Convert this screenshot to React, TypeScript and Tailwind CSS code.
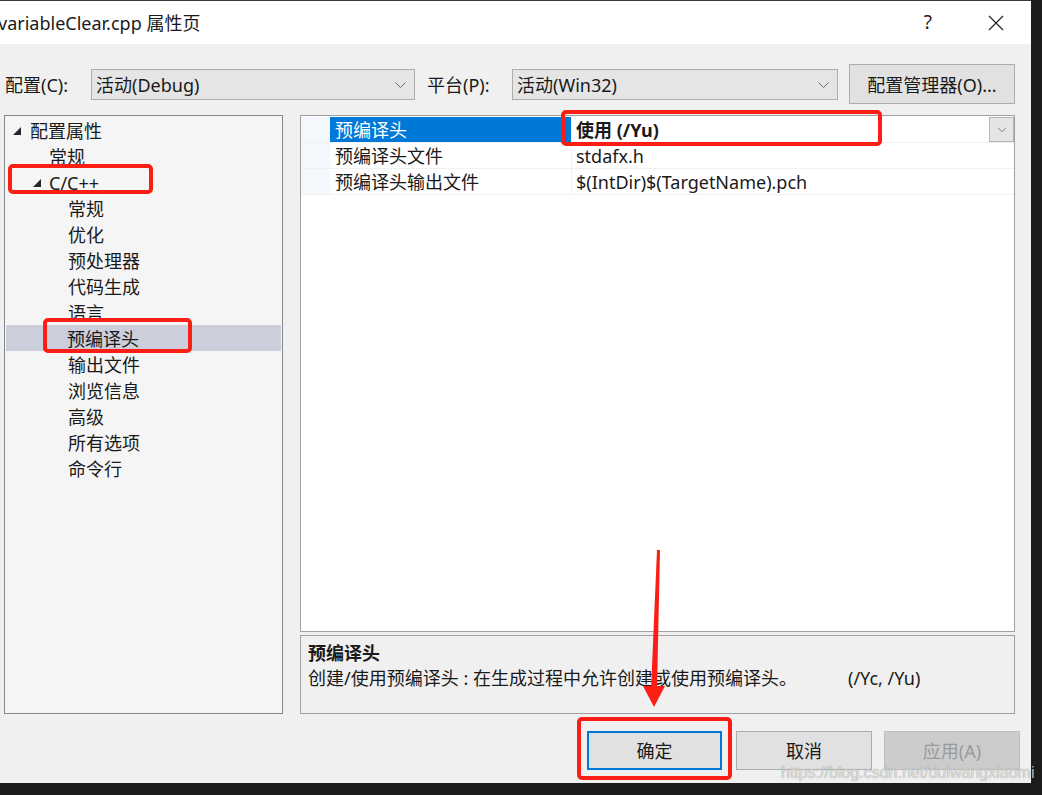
import { ChevronDown } from "lucide-react";

type TreeItem = {
  label: string;
  pad: string;
  arrow?: boolean;
  selected?: boolean;
};

const treeItems: TreeItem[] = [
  { label: "配置属性", pad: "pl-[7px]", arrow: true },
  { label: "常规", pad: "pl-[43px]" },
  { label: "C/C++", pad: "pl-[27px]", arrow: true },
  { label: "常规", pad: "pl-[62px]" },
  { label: "优化", pad: "pl-[62px]" },
  { label: "预处理器", pad: "pl-[62px]" },
  { label: "代码生成", pad: "pl-[62px]" },
  { label: "语言", pad: "pl-[62px]" },
  { label: "预编译头", pad: "pl-[61px]", selected: true },
  { label: "输出文件", pad: "pl-[62px]" },
  { label: "浏览信息", pad: "pl-[62px]" },
  { label: "高级", pad: "pl-[62px]" },
  { label: "所有选项", pad: "pl-[62px]" },
  { label: "命令行", pad: "pl-[62px]" },
];

const props = [
  { name: "预编译头", value: "使用 (/Yu)", selected: true },
  { name: "预编译头文件", value: "stdafx.h" },
  { name: "预编译头输出文件", value: "$(IntDir)$(TargetName).pch" },
];

// small filled corner triangle used by the tree's expanded nodes
function Expander() {
  return (
    <svg width="8" height="8" viewBox="0 0 8 8" className="shrink-0">
      <polygon points="8,0 8,8 0,8" fill="#262626" />
    </svg>
  );
}

function ComboChevron() {
  return (
    <svg width="11" height="6" viewBox="0 0 11 6" className="shrink-0">
      <polyline points="0.5,0.5 5.5,5.5 10.5,0.5" fill="none" stroke="#6d6d6d" strokeWidth="1" />
    </svg>
  );
}

function Combo({ text, width }: { text: string; width: string }) {
  return (
    <div className={`${width} h-[31px] bg-[#e5e5e5] border border-[#adadad] flex items-center pl-[4px] pr-[8px] pt-[2px]`}>
      <span className="flex-1">{text}</span>
      <ComboChevron />
    </div>
  );
}

export default function App() {
  return (
    <div className="relative w-[1042px] h-[795px] bg-[#1c1c1c] overflow-hidden text-[18px] text-[#1a1a1a] font-['Noto_Sans','Noto_Sans_CJK_SC',sans-serif]">
      <div className="w-[1031px] h-[783px] flex flex-col border-t border-[#3a3a3a]">
        {/* Title bar */}
        <div className="h-[43px] bg-white flex items-center shrink-0">
          <span className="ml-[-2px] flex-1 leading-none">variableClear.cpp 属性页</span>
          <span className="mr-[56px] text-[19px] leading-none text-[#222]">?</span>
          <svg width="16" height="16" viewBox="0 0 16 16" className="mr-[27px]">
            <path d="M1 1 L15 15 M15 1 L1 15" stroke="#222" strokeWidth="1.2" />
          </svg>
        </div>

        {/* Body */}
        <div className="flex-1 bg-[#f0f0f0] flex flex-col">
          {/* Configuration row */}
          <div className="mt-[20px] h-[40px] flex items-center pl-[5px]">
            <span className="w-[86px] pt-[2px]">配置(C):</span>
            <Combo text="活动(Debug)" width="w-[324px]" />
            <span className="ml-[12px] w-[85px] pt-[2px]">平台(P):</span>
            <Combo text="活动(Win32)" width="w-[326px]" />
            <div className="ml-[11px] w-[166px] h-[40px] bg-[#e1e1e1] border border-[#adadad] flex items-center justify-center pt-[2px]">
              配置管理器(O)...
            </div>
          </div>

          {/* Main panels */}
          <div className="mt-[11px] flex pl-[4px]">
            {/* Tree */}
            <div className="w-[279px] h-[599px] bg-[#f5f5f5] border border-[#828790] pt-[1px]">
              {treeItems.map((item, i) => (
                <div
                  key={i}
                  className={`h-[26px] flex items-center pt-[2px] ml-[1px] mr-[1px] ${item.pad} ${item.selected ? "bg-[#cccedb]" : ""}`}
                >
                  {item.arrow && <Expander />}
                  {item.arrow && <span className={i === 0 ? "w-[9px]" : "w-[8px]"} />}
                  <span>{item.label}</span>
                </div>
              ))}
            </div>

            {/* Right side: property grid + description */}
            <div className="ml-[17px] w-[715px] flex flex-col">
              <div className="h-[517px] bg-white border border-[#a0a0a0] pt-[1px]">
                {props.map((p, i) => (
                  <div key={i} className="h-[26px] flex border-b border-[#f0f0f0]">
                    <div className="w-[29px] bg-[#f4f7fc]" />
                    <div
                      className={`w-[242px] flex items-center pl-[5px] pt-[2px] border-r border-[#f0f0f0] ${p.selected ? "bg-[#0078d7] text-white" : ""}`}
                    >
                      {p.name}
                    </div>
                    <div className={`flex-1 flex items-center pl-[4px] ${p.selected ? "font-bold" : ""}`}>
                      <span className="flex-1 pt-[2px]">{p.value}</span>
                      {p.selected && (
                        <div className="w-[25px] h-[25px] bg-[#e5e5e5] border border-[#b4b4b4] flex items-center justify-center">
                          <ChevronDown className="size-[14px] text-[#555]" strokeWidth={1.2} />
                        </div>
                      )}
                    </div>
                  </div>
                ))}
              </div>

              <div className="mt-[3px] h-[79px] bg-[#f0f0f0] border border-[#a0a0a0] pl-[7px] pt-[5px] flex flex-col">
                <div className="h-[24px] flex items-center font-bold">预编译头</div>
                <div className="h-[26px] flex items-center">
                  <span className="w-[540px]">创建/使用预编译头 : 在生成过程中允许创建或使用预编译头。</span>
                  <span>(/Yc, /Yu)</span>
                </div>
              </div>
            </div>
          </div>

          {/* Dialog buttons */}
          <div className="mt-[17px] flex justify-end pr-[11px] gap-[14px]">
            <div className="w-[135px] h-[39px] bg-[#e1e1e1] border-2 border-[#0078d7] flex items-center justify-center pt-[2px]">
              确定
            </div>
            <div className="flex gap-[12px]">
              <div className="w-[136px] h-[39px] bg-[#e1e1e1] border border-[#adadad] flex items-center justify-center pt-[2px]">
                取消
              </div>
              <div className="w-[136px] h-[39px] bg-[#cccccc] border border-[#bfbfbf] flex items-center justify-center pt-[2px] text-[#9a9a9a]">
                应用(A)
              </div>
            </div>
          </div>
        </div>
      </div>

      {/* Red annotation boxes */}
      <div className="absolute left-[8px] top-[164px] w-[145px] h-[30px] border-4 border-[#fa1e14] rounded-[5px]" />
      <div className="absolute left-[43px] top-[318px] w-[149px] h-[35px] border-4 border-[#fa1e14] rounded-[5px]" />
      <div className="absolute left-[561px] top-[110px] w-[321px] h-[36px] border-4 border-[#fa1e14] rounded-[5px]" />
      <div className="absolute left-[577px] top-[717px] w-[155px] h-[63px] border-4 border-[#fa1e14] rounded-[5px]" />

      {/* Red arrow */}
      <svg className="absolute left-0 top-0 pointer-events-none" width="1042" height="795">
        <polygon points="657,550 660,550 657,690 651,690" fill="#fa1e14" />
        <polygon points="643,686 665,686 654,707" fill="#fa1e14" />
      </svg>

      {/* Watermark */}
      <div className="absolute left-[781px] top-[763px] text-[16px] leading-[20px] font-['Liberation_Sans',sans-serif] text-white/70 [text-shadow:0_0_1px_rgba(0,0,0,0.5)]">
        https://blog.csdn.net/duiwangxiaomi
      </div>
    </div>
  );
}
